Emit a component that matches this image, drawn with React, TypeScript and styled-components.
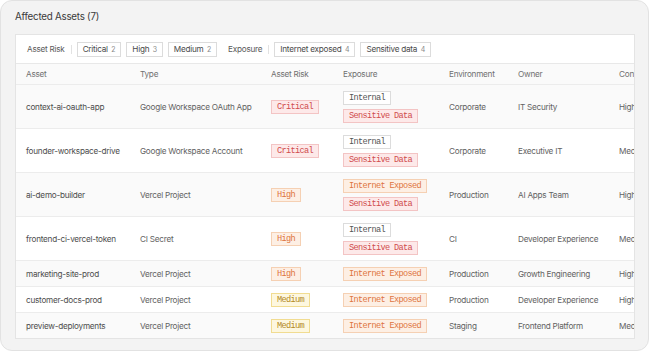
import React from "react";
import styled, { createGlobalStyle, css } from "styled-components";

const Global = createGlobalStyle`
  html, body { margin: 0; padding: 0; background: #ffffff; }
  body { font-family: Inter, "Noto Sans", sans-serif; -webkit-font-smoothing: antialiased; letter-spacing: -0.25px; }
  * { box-sizing: border-box; }
`;

const Card = styled.div`
  width: 649px;
  height: 351px;
  background: #f3f3f3;
  border: 1px solid #e2e2e2;
  border-radius: 12px;
  padding: 8px 14px 0 14px;
  display: flex;
  flex-direction: column;
  gap: 9px;
`;

const Title = styled.div`
  font-size: 9.8px;
  color: #3a3a3a;
  line-height: 16px;
`;

const Panel = styled.div`
  background: #ffffff;
  border: 1px solid #e4e4e4;
  overflow: hidden;
  width: 620px;
`;

const FilterBar = styled.div`
  height: 29px;
  display: flex;
  align-items: center;
  padding-left: 11px;
  border-bottom: 1px solid #e8e8e8;
  font-size: 8.2px;
  color: #555;
`;

const FilterGroup = styled.div`
  display: flex;
  align-items: center;
  gap: 5px;
  margin-right: 11px;
`;

const FilterLabel = styled.span`
  color: #5a5a5a;
  margin-right: 1px;
`;

const Sep = styled.span`
  width: 1px;
  height: 9px;
  background: #e2e2e2;
`;

const Chip = styled.span`
  height: 15px;
  display: inline-flex;
  align-items: center;
  gap: 3.5px;
  padding: 0 5px;
  border: 1px solid #dcdcdc;
  background: #fff;
  color: #4a4a4a;
`;

const Count = styled.span`
  color: #8a8a8a;
  font-size: 7px;
`;

const COLS = "114px 131px 72px 106px 69px 101px 90px";

const Row = styled.div<{ $shade?: boolean; $head?: boolean }>`
  display: grid;
  grid-template-columns: ${COLS};
  width: 700px;
  padding-left: 10px;
  align-items: center;
  border-bottom: 1px solid #ececec;
  font-size: 8.2px;
  color: #4a4a4a;
  background: ${(p) => (p.$shade ? "#fafafa" : "#ffffff")};
  ${(p) =>
    p.$head
      ? css`
          height: 21px;
          background: #fafafa;
          & > div { color: #707070; }
        `
      : css`
          padding-top: 6px;
          padding-bottom: 5px;
        `}
  &:last-child { border-bottom: none; }
`;

const Cell = styled.div<{ $muted?: boolean }>`
  white-space: nowrap;
  color: ${(p) => (p.$muted ? "#626262" : "#4d4d4d")};
`;

const Stack = styled.div`
  display: flex;
  flex-direction: column;
  align-items: flex-start;
  gap: 4px;
`;

type Tone = "red" | "orange" | "yellow" | "gray";

const tones: Record<Tone, { bg: string; bd: string; fg: string }> = {
  red: { bg: "#fde9e9", bd: "#f3c4c4", fg: "#d04c4c" },
  orange: { bg: "#fdefe4", bd: "#f5d0b3", fg: "#dd7440" },
  yellow: { bg: "#fdf7df", bd: "#f1dc91", fg: "#b38a24" },
  gray: { bg: "#ffffff", bd: "#dcdcdc", fg: "#555555" },
};

const Badge = styled.span<{ $tone: Tone }>`
  display: inline-flex;
  align-items: center;
  height: 14px;
  padding: 0 5px;
  font-family: "Liberation Mono", "DejaVu Sans Mono", monospace;
  font-size: 8.6px;
  letter-spacing: -0.65px;
  white-space: nowrap;
  background: ${(p) => tones[p.$tone].bg};
  border: 1px solid ${(p) => tones[p.$tone].bd};
  color: ${(p) => tones[p.$tone].fg};
`;

type Exp = "Internal" | "Internet Exposed" | "Sensitive Data";
const expTone: Record<Exp, Tone> = {
  Internal: "gray",
  "Internet Exposed": "orange",
  "Sensitive Data": "red",
};
const riskTone: Record<string, Tone> = {
  Critical: "red",
  High: "orange",
  Medium: "yellow",
};

const rows: {
  asset: string;
  type: string;
  risk: string;
  exp: Exp[];
  env: string;
  owner: string;
  conf: string;
}[] = [
  { asset: "context-ai-oauth-app", type: "Google Workspace OAuth App", risk: "Critical", exp: ["Internal", "Sensitive Data"], env: "Corporate", owner: "IT Security", conf: "High" },
  { asset: "founder-workspace-drive", type: "Google Workspace Account", risk: "Critical", exp: ["Internal", "Sensitive Data"], env: "Corporate", owner: "Executive IT", conf: "Medium" },
  { asset: "ai-demo-builder", type: "Vercel Project", risk: "High", exp: ["Internet Exposed", "Sensitive Data"], env: "Production", owner: "AI Apps Team", conf: "High" },
  { asset: "frontend-ci-vercel-token", type: "CI Secret", risk: "High", exp: ["Internal", "Sensitive Data"], env: "CI", owner: "Developer Experience", conf: "Medium" },
  { asset: "marketing-site-prod", type: "Vercel Project", risk: "High", exp: ["Internet Exposed"], env: "Production", owner: "Growth Engineering", conf: "High" },
  { asset: "customer-docs-prod", type: "Vercel Project", risk: "Medium", exp: ["Internet Exposed"], env: "Production", owner: "Developer Experience", conf: "High" },
  { asset: "preview-deployments", type: "Vercel Project", risk: "Medium", exp: ["Internet Exposed"], env: "Staging", owner: "Frontend Platform", conf: "Medium" },
];

export default function App() {
  return (
    <>
      <Global />
      <Card>
        <Title>Affected Assets (7)</Title>
        <Panel>
          <FilterBar>
            <FilterGroup>
              <FilterLabel>Asset Risk</FilterLabel>
              <Sep />
              <Chip>Critical <Count>2</Count></Chip>
              <Chip>High <Count>3</Count></Chip>
              <Chip>Medium <Count>2</Count></Chip>
            </FilterGroup>
            <FilterGroup>
              <FilterLabel>Exposure</FilterLabel>
              <Sep />
              <Chip>Internet exposed <Count>4</Count></Chip>
              <Chip>Sensitive data <Count>4</Count></Chip>
            </FilterGroup>
          </FilterBar>
          <Row $head>
            <Cell>Asset</Cell>
            <Cell>Type</Cell>
            <Cell>Asset Risk</Cell>
            <Cell>Exposure</Cell>
            <Cell>Environment</Cell>
            <Cell>Owner</Cell>
            <Cell>Confidence</Cell>
          </Row>
          {rows.map((r, i) => (
            <Row key={r.asset} $shade={i % 2 === 0}>
              <Cell>{r.asset}</Cell>
              <Cell $muted>{r.type}</Cell>
              <Cell>
                <Badge $tone={riskTone[r.risk]}>{r.risk}</Badge>
              </Cell>
              <Stack>
                {r.exp.map((e) => (
                  <Badge key={e} $tone={expTone[e]}>{e}</Badge>
                ))}
              </Stack>
              <Cell $muted>{r.env}</Cell>
              <Cell $muted>{r.owner}</Cell>
              <Cell $muted>{r.conf}</Cell>
            </Row>
          ))}
        </Panel>
      </Card>
    </>
  );
}
